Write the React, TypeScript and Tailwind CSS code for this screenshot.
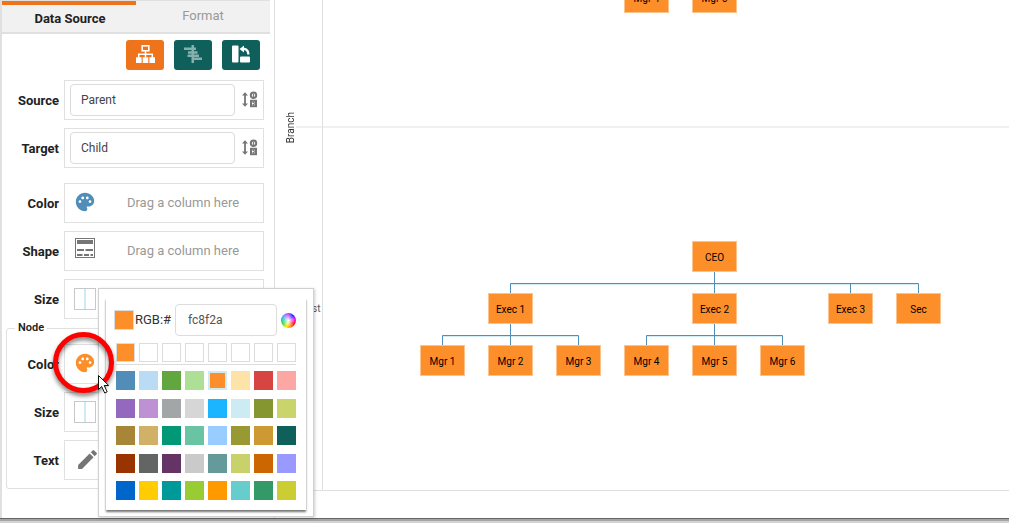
import type { ReactNode } from "react";
import { MdPalette, MdEdit } from "react-icons/md";

const recent = ["#fc8f2a", "", "", "", "", "", "", ""];

const palette = [
  "#518db9", "#b9dbf4", "#62a640", "#ade095", "#fc8f2a", "#fde3a7", "#d64541", "#fda7a5",
  "#9368be", "#be90d4", "#a2a6a7", "#d6d6d6", "#1ab4ff", "#cdebf3", "#859631", "#c9d46a",
  "#a88637", "#d1b067", "#019875", "#69c4a3", "#99ccff", "#999933", "#cc9933", "#0f5f5b",
  "#993300", "#626564", "#663366", "#cacaca", "#669999", "#c9d26a", "#cc6600", "#9999ff",
  "#0066cc", "#ffcc00", "#009999", "#99cc33", "#ff9900", "#66cccc", "#339966", "#cccc33",
];

const nodes = [
  { label: "Mgr 4", x: 349, y: -18 },
  { label: "Mgr 5", x: 417, y: -18 },
  { label: "CEO", x: 417, y: 241 },
  { label: "Exec 1", x: 213, y: 293 },
  { label: "Exec 2", x: 417, y: 293 },
  { label: "Exec 3", x: 553, y: 293 },
  { label: "Sec", x: 621, y: 293 },
  { label: "Mgr 1", x: 145, y: 345 },
  { label: "Mgr 2", x: 213, y: 345 },
  { label: "Mgr 3", x: 281, y: 345 },
  { label: "Mgr 4", x: 349, y: 345 },
  { label: "Mgr 5", x: 417, y: 345 },
  { label: "Mgr 6", x: 485, y: 345 },
];

function SortIcon() {
  return (
    <svg width="16" height="17" viewBox="0 0 16 17" fill="none" stroke="#757575">
      <path d="M3 3v11" strokeWidth="1.8" />
      <path d="M0 4.6 3 1.200 6 4.600zM0 12.400 3 15.800 6 12.400z" fill="#757575" stroke="none" />
      <circle cx="11.500" cy="4.200" r="2.700" strokeWidth="2" />
      <path d="M11.500 2.500v3.400" strokeWidth="1.200" />
      <rect x="9" y="9.800" width="5" height="5.400" strokeWidth="2" />
      <path d="M10.500 11.500h1.800v2h-1.800" strokeWidth="1" />
    </svg>
  );
}

function OrgIcon() {
  return (
    <svg width="19" height="18" viewBox="0 0 19 18" fill="none" stroke="#fff">
      <rect x="6.2" y="0.800" width="6.600" height="5" strokeWidth="1.600" />
      <path d="M9.500 6v7M2.700 13V9.200h13.600V13" strokeWidth="1.500" />
      <path d="M0 12.300h5.600V18H0zM6.700 12.300h5.600V18H6.700zM13.400 12.300H19V18h-5.600z" fill="#fff" stroke="none" />
    </svg>
  );
}

function AlignIcon() {
  return (
    <svg width="18" height="18" viewBox="0 0 18 18" fill="#87afad">
      <path d="M7.500 0H10v18H7.500zM0 2.500h12v2.500H0zM4 6.200h9.500v2.500H4zM3.500 9.600H15V12H3.500zM7.500 12.600H18V15H7.500z" />
    </svg>
  );
}

function RotateIcon() {
  return (
    <svg width="18" height="18" viewBox="0 0 18 18" fill="#fff">
      <rect x="0" y="0.500" width="6.500" height="17" rx="1" />
      <rect x="8" y="11.500" width="10" height="6" rx="1" />
      <path d="M12 0.500v2.300c3.300.3 5.500 2.600 5.500 6.700h-2.300c0-2.500-1-4-3.200-4.400v2.400L7.500 4z" />
    </svg>
  );
}

function ShapeIcon() {
  return (
    <svg width="20" height="20" viewBox="0 0 20 20" fill="none" stroke="#757575">
      <rect x="0.500" y="0.500" width="19" height="19" />
      <path d="M2 4h16" strokeWidth="4" />
      <path d="M2 12h7M10.500 12H18M2 17h5.500M9 17h5M15.500 17H18" strokeWidth="2" />
    </svg>
  );
}

function SizeIcon() {
  return (
    <span className="flex h-[22px] w-[22px] justify-center border border-[#c8c8c8]">
      <span className="w-[2px] bg-[#cdebf3]" />
    </span>
  );
}

function SortRow({ label, value }: { label: string; value: string }) {
  return (
    <div className="flex h-10 items-center">
      <label htmlFor={label} className="flex-1 pt-[2px] pr-[5px] text-right font-bold">{label}</label>
      <div className="flex h-10 w-[200px] items-center border border-[#e0e0e0] pl-[5px]">
        <input
          id={label}
          defaultValue={value}
          className="h-8 w-[165px] rounded border border-[#dcdcdc] px-[10px] text-[12px] text-[#43434f] outline-none"
        />
        <button aria-label={`Sort ${label}`} className="ml-[7px] pb-[2px]"><SortIcon /></button>
      </div>
    </div>
  );
}

function DropRow({ label, icon }: { label: string; icon: ReactNode }) {
  return (
    <div className="flex h-10 items-center">
      <span className="flex-1 pt-[2px] pr-[5px] text-right font-bold">{label}</span>
      <div className="flex h-10 w-[200px] items-center border border-[#e0e0e0]">
        <button aria-label={`Edit ${label}`} className="flex w-10 justify-center">{icon}</button>
        <span className="flex-1 pr-[2px] text-center text-[#999]">Drag a column here</span>
      </div>
    </div>
  );
}

function Sidebar() {
  return (
    <aside className="w-[275px] shrink-0 border-r border-l-2 border-[#e0e0e0] pr-[4px]">
      <div className="flex h-[34px] border-t border-b-2 border-[#e0e0e0] bg-[#f1f1f1]">
        <button className="w-1/2 border-t-4 border-[#ee731b] pt-px pl-[2px] font-bold">Data Source</button>
        <button className="w-1/2 pb-[2px] text-[#999]">Format</button>
      </div>
      <div className="flex justify-end gap-[10px] pt-[6px] pr-[10px]">
        <button aria-label="Tree layout" className="flex h-[30px] w-[38px] items-center justify-center rounded-[3px] bg-[#ee731b] pb-[2px]"><OrgIcon /></button>
        <button aria-label="Align" className="flex h-[30px] w-[38px] items-center justify-center rounded-[3px] bg-[#0f5f5b] pb-[2px]"><AlignIcon /></button>
        <button aria-label="Rotate" className="flex h-[30px] w-[38px] items-center justify-center rounded-[3px] bg-[#0f5f5b] pb-[2px]"><RotateIcon /></button>
      </div>
      <div className="flex flex-col gap-2 pt-[10px] pr-[6px]">
        <SortRow label="Source" value="Parent" />
        <SortRow label="Target" value="Child" />
      </div>
      <div className="flex flex-col gap-2 pt-[15px] pr-[6px]">
        <DropRow label="Color" icon={<MdPalette size={22} color="#518db9" className="mb-[2px]" />} />
        <DropRow label="Shape" icon={<span className="pb-[6px]"><ShapeIcon /></span>} />
        <DropRow label="Size" icon={<SizeIcon />} />
      </div>
      <fieldset className="ml-1 rounded-[3px] border border-[#e0e0e0] pr-[5px] pb-2 pl-0">
        <legend className="ml-2 px-[3px] text-[11px] leading-[18px] font-semibold">Node</legend>
        <div className="flex flex-col gap-2 pt-[7px]">
          <DropRow label="Color" icon={<MdPalette size={22} color="#fc8f2a" className="mb-[2px]" />} />
          <DropRow label="Size" icon={<SizeIcon />} />
          <DropRow label="Text" icon={<MdEdit size={25} color="#757575" className="mb-[2px] ml-1" />} />
        </div>
      </fieldset>
    </aside>
  );
}

function Chart() {
  return (
    <section className="relative flex min-w-0 flex-1 flex-col overflow-hidden pb-[27px] text-[10px]">
      <div className="flex h-[128px] shrink-0">
        <div className="w-12 border-r border-[#e0e0e0]" />
        <div className="flex-1 border-b-2 border-[#f0f0f0]" />
      </div>
      <div className="flex flex-1 border-b border-[#e0e0e0]">
        <div className="w-12 border-r border-[#e0e0e0]" />
      </div>
      <span className="absolute top-[126px] left-[21px] h-[2px] w-[26px] bg-[#f0f0f0]" />
      <span className="absolute top-[112px] left-[8px] rotate-180 leading-4 text-[#333] [writing-mode:vertical-rl]">Branch</span>
      <span className="absolute top-[301px] left-[37px] leading-4 text-[#555]">st</span>
      <svg className="absolute top-0 left-0" width="734" height="490" fill="none" stroke="#518db9">
        <path d="M235.500 284.500h408M167.500 336.500h136M371.500 336.500h136" stroke="#d3edf5" />
        <path d="M235.500 293v-9.500h408v9.500M439.500 272v21M575.500 293v-9.500M167.500 345v-9.500h136v9.500M235.500 324v21M371.500 345v-9.500h136v9.500M439.500 324v21" />
      </svg>
      {nodes.map((n) => (
        <div
          key={`${n.x},${n.y}`}
          className="absolute flex h-[31px] w-[45px] items-center justify-center border border-[#fdc38b] bg-[#fc8f2a] pt-[2px] text-black"
          style={{ left: n.x, top: n.y }}
        >
          {n.label}
        </div>
      ))}
    </section>
  );
}

function ColorPopup() {
  return (
    <div className="absolute top-[288px] left-[98px] w-[216px] border border-[#d0d0d0] bg-white px-[7px] pt-[9px] pb-[6px] shadow-[1px_1px_3px_rgba(0,0,0,0.2)]">
      <div className="bg-white px-[10px] pt-[6px] pb-[10px] shadow-[0_2px_2px_rgba(0,0,0,0.55)]">
        <div className="-ml-[2px] flex items-center">
          <span className="h-5 w-5 border border-[#dcdcdc] bg-[#fc8f2a]" />
          <label htmlFor="rgb" className="w-[41px] pl-[1px] text-[13px] text-[#333]">RGB:#</label>
          <input id="rgb" defaultValue="fc8f2a" className="h-8 w-[102px] rounded border border-[#dcdcdc] px-3 text-[12px] text-[#555] outline-none" />
          <button
            aria-label="Color wheel"
            className="ml-1 h-[15px] w-[15px] rounded-full bg-[radial-gradient(circle,#fff_0%,transparent_65%),conic-gradient(#b4f,#22f,#f0f,#f00,#f80,#fe0,#3d3,#0cc,#88f,#b4f)]"
          />
        </div>
        <div className="mt-[7px] flex gap-1 border-b border-[#dcdcdc] pb-[2px]">
          {recent.map((c, i) => (
            <button key={i} aria-label={`Recent ${i + 1}`} className="h-[19px] w-[19px] border border-[#dcdcdc]" style={{ backgroundColor: c || "#fff" }} />
          ))}
        </div>
        <div className="mt-[6px] grid h-[129px] grid-cols-8 content-between gap-x-1">
          {palette.map((c, i) => (
            <button key={i} aria-label={c} className={i === 4 ? "h-[19px] w-[19px] border-2 border-[#cdebf3]" : "h-[19px] w-[19px]"} style={{ backgroundColor: c }} />
          ))}
        </div>
      </div>
    </div>
  );
}

export default function App() {
  return (
    <div className="relative flex min-h-screen flex-col overflow-hidden bg-white font-['Roboto',sans-serif] text-[13px] text-[#222]">
      <main className="flex flex-1">
        <Sidebar />
        <Chart />
      </main>
      <footer className="h-[5px] border-t border-[#666] bg-[#d3d3d3]">
        <div className="h-[2px] bg-[#a5a5a5]" />
      </footer>
      <ColorPopup />
      <svg className="pointer-events-none absolute top-[327px] left-[48px] overflow-visible" width="72" height="76" fill="none">
        <g className="drop-shadow-[0_3px_2px_rgba(0,0,0,0.5)]">
          <circle cx="35.500" cy="35.500" r="28" stroke="#f00" strokeWidth="5" />
        </g>
        <path d="M50.500 48.500v14l3.200-3 3 6.500 2.500-1.200-3-6.300h4.500z" fill="#fff" stroke="#111" />
      </svg>
    </div>
  );
}
